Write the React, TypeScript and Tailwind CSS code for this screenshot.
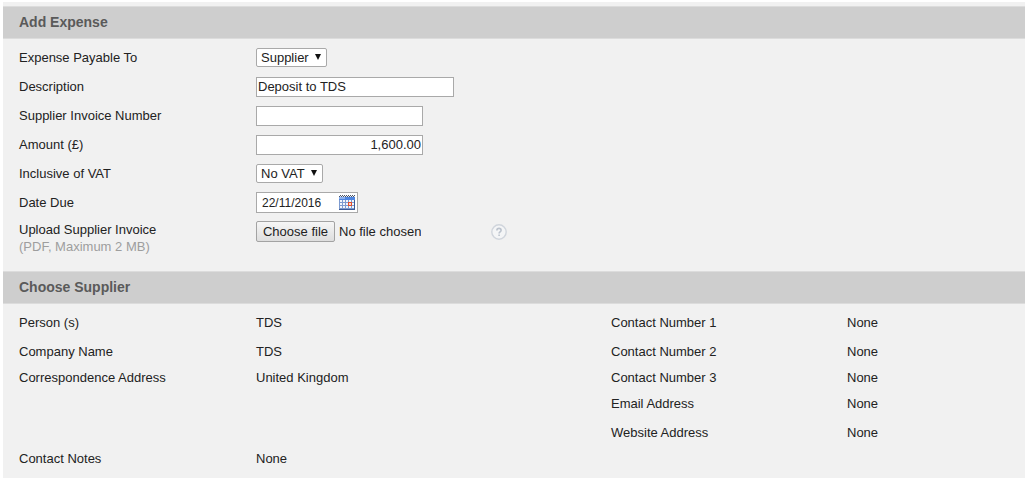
import { useRef, useState } from "react";
import type { ReactNode } from "react";

type Detail = { label: string; value: string };

const leftDetails: Detail[] = [
  { label: "Person (s)", value: "TDS" },
  { label: "Company Name", value: "TDS" },
  { label: "Correspondence Address", value: "United Kingdom" },
];

const rightDetails: Detail[] = [
  { label: "Contact Number 1", value: "None" },
  { label: "Contact Number 2", value: "None" },
  { label: "Contact Number 3", value: "None" },
  { label: "Email Address", value: "None" },
  { label: "Website Address", value: "None" },
];

function SectionTitle({ children }: { children: ReactNode }) {
  return (
    <h2 className="border-y border-[#dcdcdc] bg-[#cecece] px-4 text-sm leading-[31px] font-bold text-[#5a5a5a]">
      {children}
    </h2>
  );
}

function FormRow({ id, label, children }: { id: string; label: string; children: ReactNode }) {
  return (
    <div className="grid h-[29px] grid-cols-[237fr_769fr] items-center">
      <label htmlFor={id}>{label}</label>
      <div className="flex items-center">{children}</div>
    </div>
  );
}

function SelectBox({ id, options, width }: { id: string; options: string[]; width: string }) {
  return (
    <div className={`relative ${width}`}>
      <select
        id={id}
        className="block h-[19px] w-full appearance-none rounded-xs border border-[#a9a9a9] bg-white pl-1 leading-4 text-[#222]"
      >
        {options.map((option) => (
          <option key={option}>{option}</option>
        ))}
      </select>
      <svg viewBox="0 0 6 6" className="pointer-events-none absolute top-1.5 right-1.5 size-1.5" aria-hidden="true">
        <path d="M0 0h6L3 6z" fill="#111" />
      </svg>
    </div>
  );
}

function CalendarIcon() {
  return (
    <svg viewBox="0 0 16 15" className="h-[15px] w-4" shapeRendering="crispEdges" aria-hidden="true">
      <path d="M0 1h16v14H0z" fill="#7d9bd0" />
      <path d="M0 1h16v1H0z" fill="#dfe6f2" />
      <path d="M1 0h1v1H1zM3 0h1v1H3zM5 0h1v1H5zM7 0h1v1H7zM9 0h1v1H9zM11 0h1v1h-1zM13 0h1v1h-1zM15 0h1v1h-1zM0 1h1v1H0zM2 1h1v1H2zM4 1h1v1H4zM6 1h1v1H6zM8 1h1v1H8zM10 1h1v1h-1zM12 1h1v1h-1zM14 1h1v1h-1z" fill="#4b5568" />
      <path d="M0 2h16v3H0z" fill="#4f86e0" />
      <path d="M0 2h6v2H0z" fill="#8ab0f0" />
      <path
        d="M1 5h2v2H1zM4 5h2v2H4zM7 5h2v2H7zM10 5h2v2h-2zM13 5h2v2h-2zM1 8h2v2H1zM4 8h2v2H4zM7 8h2v2H7zM13 8h2v2h-2zM1 11h2v2H1zM4 11h2v2H4zM7 11h2v2H7zM10 11h2v2h-2zM13 11h2v2h-2z"
        fill="#f4f7fc"
      />
      <path d="M9 7h4v4H9z" fill="#e2502f" />
      <path d="M10 8h2v2h-2z" fill="#fbd5c8" />
      <path d="M0 14h16v1H0zM15 5h1v10h-1z" fill="#3c5a96" />
    </svg>
  );
}

function HelpIcon() {
  return (
    <svg viewBox="0 0 16 16" className="size-4" fill="none" aria-hidden="true">
      <circle cx="8" cy="8" r="7.2" fill="#f4f5f6" stroke="#d0d5dc" strokeWidth="1.4" />
      <path d="M5.9 6.4c0-1.2.9-2 2.1-2s2.1.8 2.1 1.9c0 1.6-2 1.6-2 3.1" stroke="#bcc3cd" strokeWidth="1.6" />
      <path d="M7.3 10.5h1.6V12H7.3z" fill="#bcc3cd" />
    </svg>
  );
}

function DetailList({ items, columns }: { items: Detail[]; columns: string }) {
  return (
    <dl>
      {items.map((item, i) => (
        <div key={item.label} className={`grid items-center ${columns} ${i === 2 ? "h-[23px]" : "h-[29px]"}`}>
          <dt>{item.label}</dt>
          <dd>{item.value}</dd>
        </div>
      ))}
    </dl>
  );
}

export default function App() {
  const [description, setDescription] = useState("Deposit to TDS");
  const [invoiceNumber, setInvoiceNumber] = useState("");
  const [amount, setAmount] = useState("1,600.00");
  const [dateDue, setDateDue] = useState("22/11/2016");
  const [fileName, setFileName] = useState("");
  const fileInput = useRef<HTMLInputElement>(null);

  return (
    <div className="bg-white pt-0.5 pr-[5px] pb-1 pl-[3px] font-['Liberation_Sans',Arial,sans-serif] text-[13px] leading-[17px] text-[#222]">
      <main className="bg-[#f1f1f1] pt-1">
        <form onSubmit={(e) => e.preventDefault()}>
          <SectionTitle>Add Expense</SectionTitle>

          <div className="pt-1 pb-4 pl-4">
            <FormRow id="payable-to" label="Expense Payable To">
              <SelectBox id="payable-to" options={["Supplier", "Landlord"]} width="w-[71px]" />
            </FormRow>
            <FormRow id="description" label="Description">
              <input
                id="description"
                type="text"
                value={description}
                onChange={(e) => setDescription(e.target.value)}
                className="h-5 w-[198px] border border-[#a9a9a9] bg-white px-px"
              />
            </FormRow>
            <FormRow id="invoice-number" label="Supplier Invoice Number">
              <input
                id="invoice-number"
                type="text"
                value={invoiceNumber}
                onChange={(e) => setInvoiceNumber(e.target.value)}
                className="h-5 w-[167px] border border-[#a9a9a9] bg-white px-px"
              />
            </FormRow>
            <FormRow id="amount" label="Amount (£)">
              <input
                id="amount"
                type="text"
                value={amount}
                onChange={(e) => setAmount(e.target.value)}
                className="h-5 w-[167px] border border-[#a9a9a9] bg-white px-px text-right"
              />
            </FormRow>
            <FormRow id="vat" label="Inclusive of VAT">
              <SelectBox id="vat" options={["No VAT", "20%"]} width="w-[67px]" />
            </FormRow>
            <FormRow id="date-due" label="Date Due">
              <div className="flex h-[21px] w-[102px] items-center justify-between border border-[#a9a9a9] bg-white pr-0.5 pl-[5px]">
                <input
                  id="date-due"
                  type="text"
                  value={dateDue}
                  onChange={(e) => setDateDue(e.target.value)}
                  className="w-[70px] text-xs"
                />
                <button type="button" aria-label="Pick a date">
                  <CalendarIcon />
                </button>
              </div>
            </FormRow>

            <div className="grid grid-cols-[237fr_769fr] items-start pt-1">
              <label htmlFor="invoice-file">
                Upload Supplier Invoice
                <span className="block text-[#9e9e9e]">(PDF, Maximum 2 MB)</span>
              </label>
              <div className="flex items-center">
                <div className="flex w-[235px] items-center gap-1">
                  <input
                    ref={fileInput}
                    id="invoice-file"
                    type="file"
                    accept="application/pdf"
                    tabIndex={-1}
                    onChange={(e) => setFileName(e.target.files?.[0]?.name ?? "")}
                    className="hidden"
                  />
                  <button
                    type="button"
                    onClick={() => fileInput.current?.click()}
                    className="h-[21px] w-[79px] rounded-xs border border-[#a3a3a3] bg-linear-to-b from-[#f6f6f6] to-[#dedede] whitespace-nowrap"
                  >
                    Choose file
                  </button>
                  <span className="truncate">{fileName || "No file chosen"}</span>
                </div>
                <button type="button" aria-label="Help">
                  <HelpIcon />
                </button>
              </div>
            </div>
          </div>
        </form>

        <section>
          <SectionTitle>Choose Supplier</SectionTitle>
          <div className="pt-1 pb-2 pl-4">
            <div className="grid grid-cols-[592fr_414fr]">
              <DetailList items={leftDetails} columns="grid-cols-[237fr_355fr]" />
              <DetailList items={rightDetails} columns="grid-cols-[236fr_178fr]" />
            </div>
            <dl className="grid h-[23px] grid-cols-[237fr_769fr] items-center">
              <dt>Contact Notes</dt>
              <dd>None</dd>
            </dl>
          </div>
        </section>
      </main>
    </div>
  );
}
